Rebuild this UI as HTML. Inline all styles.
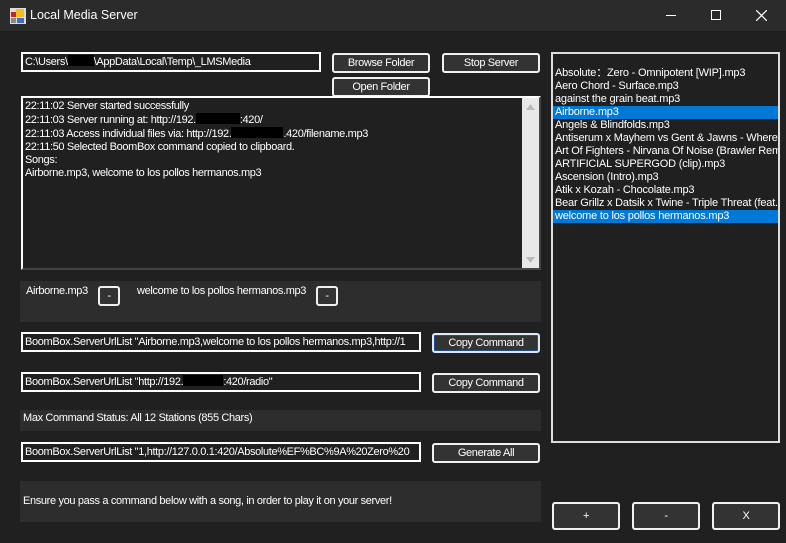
<!DOCTYPE html>
<html><head><meta charset="utf-8"><style>
*{margin:0;padding:0;box-sizing:border-box}
body{width:786px;height:543px;background:#202020;font-family:"Liberation Sans",Arial,sans-serif;font-size:11px;color:#fff;position:relative;overflow:hidden;letter-spacing:-0.35px}
.a{position:absolute;white-space:nowrap;overflow:hidden}
.tb{border:2px solid #fff;background:#202020;padding:0 0 0 2px;line-height:16px}
.btn{border:2px solid #f0f0f0;border-radius:3px;background:#333;text-align:center;line-height:17px;color:#fff}
.pan{background:#2d2d2d}
.blk{display:inline-block;background:#000;height:11px;vertical-align:-1px}
.li{height:13px;line-height:13px;padding-left:2px;letter-spacing:-0.2px}
.sel{background:#0078d7}
</style></head><body>
<div class="a" style="left:0;top:0;width:786px;height:31px;background:#2b2b2b"></div>
<svg class="a" style="left:10px;top:8px" width="16" height="16"><rect x="0" y="0" width="16" height="16" fill="#ddd"/><rect x="1" y="4" width="5" height="5" fill="#c22"/><rect x="6" y="1" width="8" height="8" fill="#f0c020"/><rect x="1" y="10" width="5" height="5" fill="#888"/><rect x="7" y="10" width="7" height="5" fill="#3a6fd0"/></svg>
<div class="a" style="left:30px;top:8px;font-size:12.5px;letter-spacing:0">Local Media Server</div>
<div class="a" style="left:666px;top:15px;width:10px;height:1px;background:#fff"></div>
<div class="a" style="left:711px;top:10px;width:10px;height:10px;border:1px solid #fff"></div>
<svg class="a" style="left:756px;top:10px" width="11" height="11"><path d="M0 0L11 11M11 0L0 11" stroke="#fff" stroke-width="1.2"/></svg>

<div class="a tb" style="left:21px;top:52px;width:300px;height:20px">C:\Users\<span class="blk" style="width:26px"></span>\AppData\Local\Temp\_LMSMedia</div>
<div class="a btn" style="left:332px;top:53px;width:98px;height:20px">Browse Folder</div>
<div class="a btn" style="left:442px;top:53px;width:98px;height:20px">Stop Server</div>
<div class="a btn" style="left:332px;top:77px;width:98px;height:20px">Open Folder</div>

<div class="a" style="left:21px;top:96px;width:520px;height:174px;border:2px solid #fff;border-right-color:#444;border-bottom-color:#444;background:#202020;line-height:13px;padding:2px 0 0 2px">
22:11:02 Server started successfully<br>22:11:03 Server running at: http://192.<span class="blk" style="width:44px"></span>:420/<br>22:11:03 Access individual files via: http://192.<span class="blk" style="width:52px"></span>.420/filename.mp3<br>22:11:50 Selected BoomBox command copied to clipboard.<br>Songs:<br>Airborne.mp3, welcome to los pollos hermanos.mp3</div>
<div class="a" style="left:522px;top:98px;width:17px;height:170px;background:#e8e8e8"></div>
<svg class="a" style="left:526px;top:104px" width="9" height="6"><path d="M0 6L4.5 0L9 6Z" fill="#bbb"/></svg>
<svg class="a" style="left:526px;top:257px" width="9" height="6"><path d="M0 0L4.5 6L9 0Z" fill="#bbb"/></svg>

<div class="a pan" style="left:20px;top:281px;width:521px;height:41px"></div>
<div class="a" style="left:26px;top:285px">Airborne.mp3</div>
<div class="a btn" style="left:98px;top:286px;width:22px;height:20px">-</div>
<div class="a" style="left:137px;top:285px">welcome to los pollos hermanos.mp3</div>
<div class="a btn" style="left:316px;top:286px;width:22px;height:20px">-</div>

<div class="a tb" style="left:21px;top:332px;width:400px;height:20px">BoomBox.ServerUrlList "Airborne.mp3,welcome to los pollos hermanos.mp3,http://1</div>
<div class="a btn" style="left:432px;top:333px;width:108px;height:20px;border-color:#dfe8f5;box-shadow:0 0 0 1px #1f4f8f inset">Copy Command</div>
<div class="a tb" style="left:21px;top:372px;width:400px;height:20px">BoomBox.ServerUrlList "http://192.<span class="blk" style="width:40px"></span>:420/radio"</div>
<div class="a btn" style="left:432px;top:373px;width:108px;height:20px">Copy Command</div>

<div class="a pan" style="left:20px;top:410px;width:521px;height:21px"></div>
<div class="a" style="left:23px;top:412px">Max Command Status: All 12 Stations (855 Chars)</div>

<div class="a tb" style="left:21px;top:442px;width:400px;height:20px">BoomBox.ServerUrlList "1,http://127.0.0.1:420/Absolute%EF%BC%9A%20Zero%20</div>
<div class="a btn" style="left:432px;top:443px;width:108px;height:20px">Generate All</div>

<div class="a pan" style="left:20px;top:481px;width:521px;height:41px"></div>
<div class="a" style="left:23px;top:495px">Ensure you pass a command below with a song, in order to play it on your server!</div>

<div class="a" style="left:551px;top:52px;width:229px;height:391px;border:2px solid #ddd;background:#202020;padding-top:13px">
<div class="li">Absolute：Zero - Omnipotent [WIP].mp3</div>
<div class="li">Aero Chord - Surface.mp3</div>
<div class="li">against the grain beat.mp3</div>
<div class="li sel">Airborne.mp3</div>
<div class="li">Angels &amp; Blindfolds.mp3</div>
<div class="li">Antiserum x Mayhem vs Gent &amp; Jawns - Where The</div>
<div class="li">Art Of Fighters - Nirvana Of Noise (Brawler Remix)</div>
<div class="li">ARTIFICIAL SUPERGOD (clip).mp3</div>
<div class="li">Ascension (Intro).mp3</div>
<div class="li">Atik x Kozah - Chocolate.mp3</div>
<div class="li">Bear Grillz x Datsik x Twine - Triple Threat (feat.</div>
<div class="li sel">welcome to los pollos hermanos.mp3</div>
</div>

<div class="a btn" style="left:552px;top:502px;width:68px;height:28px;line-height:25px">+</div>
<div class="a btn" style="left:632px;top:502px;width:68px;height:28px;line-height:25px">-</div>
<div class="a btn" style="left:712px;top:502px;width:68px;height:28px;line-height:25px">X</div>
</body></html>
